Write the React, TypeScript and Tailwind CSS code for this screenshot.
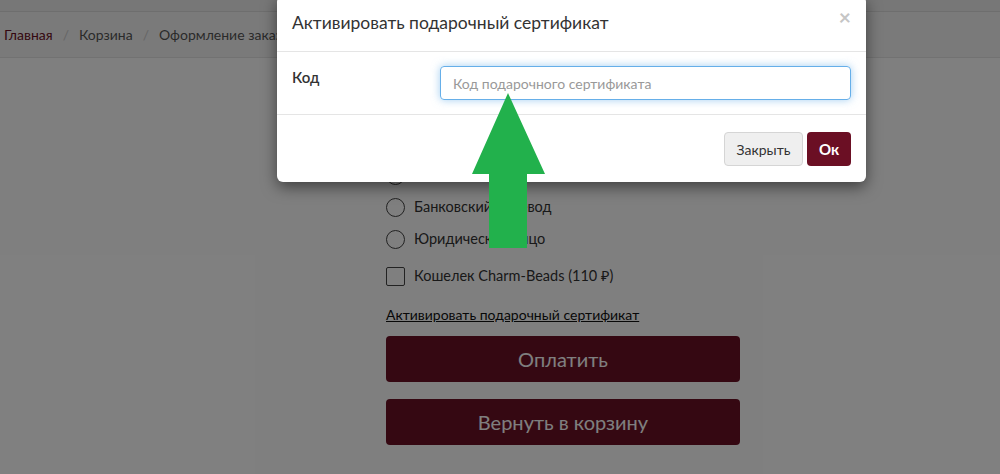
import React from "react";

const font = { fontFamily: "Lato, 'Noto Sans', sans-serif" };

function Radio({ label }: { label: string }) {
  return (
    <label className="flex h-[32px] items-center gap-[9px] text-[14.5px] text-[#333]">
      <span className="h-[19px] w-[19px] rounded-full border-[1.5px] border-[#444] bg-white" />
      {label}
    </label>
  );
}

export default function App() {
  return (
    <div style={font} className="relative h-[474px] w-[1000px] overflow-hidden bg-white">
      <div className="h-[12px] border-b border-[#ddd] bg-[#eeeeee]" />
      <nav className="flex h-[46px] items-center gap-[10px] border-b border-[#e5e5e5] bg-[#f5f5f5] px-[4px] text-[14px]">
        <span className="text-[#6b0f24]">Главная</span>
        <span className="text-[#ccc]">/</span>
        <span className="text-[#555]">Корзина</span>
        <span className="text-[#ccc]">/</span>
        <span className="text-[#555]">Оформление заказа</span>
      </nav>

      <main className="ml-[386px] w-[354px] pt-[101px]">
        <Radio label="Банковская карта" />
        <Radio label="Банковский перевод" />
        <Radio label="Юридическое лицо" />
        <label className="mt-[5px] flex h-[32px] items-center gap-[9px] text-[14.5px] text-[#333]">
          <span className="h-[19px] w-[19px] rounded-[2px] border-[1.5px] border-[#444] bg-white" />
          Кошелек Charm-Beads (110 ₽)
        </label>
        <a href="#" className="mt-[12px] block text-[14px] leading-[22px] text-[#111] underline">
          Активировать подарочный сертификат
        </a>
        <button className="mt-[10px] h-[46px] w-full rounded-[4px] bg-[#6b1024] text-[20px] text-white">
          Оплатить
        </button>
        <button className="mt-[17px] h-[46px] w-full rounded-[4px] bg-[#6b1024] text-[20px] text-white">
          Вернуть в корзину
        </button>
      </main>

      <div className="absolute inset-0 bg-black/50" />

      <div className="absolute left-[277px] top-[-4px] w-[589px] rounded-[6px] bg-white shadow-[0_5px_15px_rgba(0,0,0,0.5)]">
        <div className="relative flex h-[56px] items-center border-b border-[#e5e5e5] px-[15px]">
          <h4 className="text-[17.5px] text-[#333]">Активировать подарочный сертификат</h4>
          <button className="absolute right-[15px] top-[10px] text-[21px] font-bold leading-none text-[#c5c5c5]">×</button>
        </div>
        <div className="flex items-start px-[15px] py-[14px]">
          <label className="w-[148px] text-[15px] font-semibold text-[#333]">Код</label>
          <input
            placeholder="Код подарочного сертификата"
            className="h-[34px] w-[411px] rounded-[4px] border border-[#66afe9] px-[12px] text-[14px] text-[#555] shadow-[0_0_8px_rgba(102,175,233,0.6)] outline-none placeholder:text-[#999]"
          />
        </div>
        <div className="flex justify-end gap-[4px] border-t border-[#e5e5e5] px-[15px] pb-[16px] pt-[17px]">
          <button className="h-[34px] w-[79px] rounded-[4px] border border-[#d5d5d5] bg-[#efefef] text-[14px] text-[#333]">
            Закрыть
          </button>
          <button className="h-[34px] w-[44px] rounded-[4px] bg-[#6b0f24] text-[15px] font-bold text-white">
            Ок
          </button>
        </div>
      </div>

      <svg className="absolute left-0 top-0" width="1000" height="474">
        <polygon
          points="508,93 545,174 527,174 527,248 489,248 489,174 472,174"
          fill="#22b14c"
        />
      </svg>
    </div>
  );
}
